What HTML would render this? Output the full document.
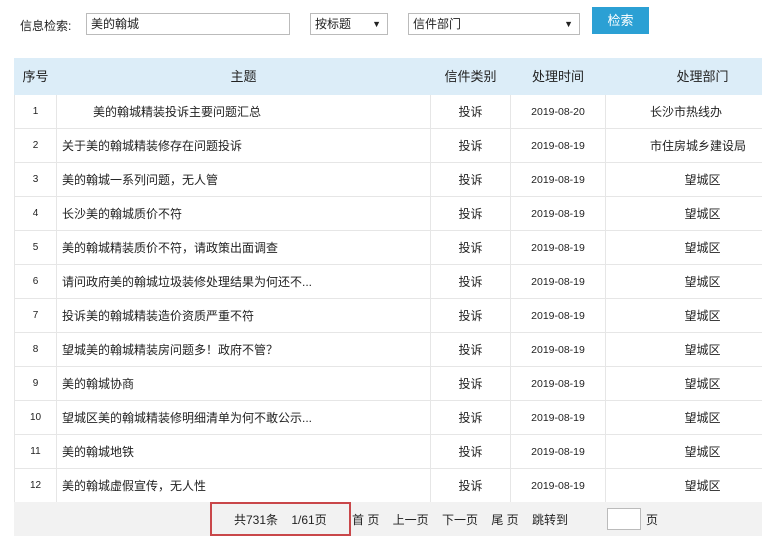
<html><head><style>
body{margin:0;width:762px;height:536px;background:#fff;font-family:"Liberation Sans","Noto Sans CJK SC",sans-serif;font-size:12px;color:#222;position:relative;overflow:hidden}
.a{position:absolute}
.in{border:1px solid #bbb;height:22px;box-sizing:border-box;background:#fff;line-height:20px;padding-left:4px;font-size:12px}
table{position:absolute;left:14px;top:58px;border-collapse:collapse;width:786px;table-layout:fixed}
td{border:1px solid #e6e6e6;height:34px;padding:0;font-size:12px;vertical-align:middle;line-height:14px}
tr.h td{background:#dcedf8;height:36px;font-size:13px;border-color:#dcedf8;text-align:center}
.c{text-align:center}
.n{font-size:10px;text-align:center}
.d{font-size:10.5px;text-align:center}
.t{padding-left:5px}
</style></head><body>
<div class="a" style="left:20px;top:17px;font-size:12px">信息检索:</div>
<div class="a in" style="left:86px;top:13px;width:204px">美的翰城</div>
<div class="a in" style="left:310px;top:13px;width:78px">按标题<span style="position:absolute;right:6px;font-size:9px">▼</span></div>
<div class="a in" style="left:408px;top:13px;width:172px">信件部门<span style="position:absolute;right:6px;font-size:9px">▼</span></div>
<div class="a" style="left:592px;top:7px;width:57px;height:27px;background:#2ba0d4;color:#fff;text-align:center;line-height:27px;font-size:13px">检索</div>
<table>
<col style="width:42px"><col style="width:374px"><col style="width:80px"><col style="width:95px"><col>
<tr class="h"><td>序号</td><td>主题</td><td>信件类别</td><td>处理时间</td><td>处理部门</td></tr>
<tr><td class="n">1</td><td class="t" style="padding-left:36px">美的翰城精装投诉主要问题汇总</td><td class="c">投诉</td><td class="d">2019-08-20</td><td style="padding-left:44px">长沙市热线办</td></tr>
<tr><td class="n">2</td><td class="t">关于美的翰城精装修存在问题投诉</td><td class="c">投诉</td><td class="d">2019-08-19</td><td style="padding-left:44px">市住房城乡建设局</td></tr>
<tr><td class="n">3</td><td class="t">美的翰城一系列问题，无人管</td><td class="c">投诉</td><td class="d">2019-08-19</td><td class="c">望城区</td></tr>
<tr><td class="n">4</td><td class="t">长沙美的翰城质价不符</td><td class="c">投诉</td><td class="d">2019-08-19</td><td class="c">望城区</td></tr>
<tr><td class="n">5</td><td class="t">美的翰城精装质价不符，请政策出面调查</td><td class="c">投诉</td><td class="d">2019-08-19</td><td class="c">望城区</td></tr>
<tr><td class="n">6</td><td class="t">请问政府美的翰城垃圾装修处理结果为何还不...</td><td class="c">投诉</td><td class="d">2019-08-19</td><td class="c">望城区</td></tr>
<tr><td class="n">7</td><td class="t">投诉美的翰城精装造价资质严重不符</td><td class="c">投诉</td><td class="d">2019-08-19</td><td class="c">望城区</td></tr>
<tr><td class="n">8</td><td class="t">望城美的翰城精装房问题多！政府不管？</td><td class="c">投诉</td><td class="d">2019-08-19</td><td class="c">望城区</td></tr>
<tr><td class="n">9</td><td class="t">美的翰城协商</td><td class="c">投诉</td><td class="d">2019-08-19</td><td class="c">望城区</td></tr>
<tr><td class="n">10</td><td class="t">望城区美的翰城精装修明细清单为何不敢公示...</td><td class="c">投诉</td><td class="d">2019-08-19</td><td class="c">望城区</td></tr>
<tr><td class="n">11</td><td class="t">美的翰城地铁</td><td class="c">投诉</td><td class="d">2019-08-19</td><td class="c">望城区</td></tr>
<tr><td class="n">12</td><td class="t">美的翰城虚假宣传，无人性</td><td class="c">投诉</td><td class="d">2019-08-19</td><td class="c">望城区</td></tr>
</table>
<div class="a" style="left:14px;top:502px;width:748px;height:34px;background:#f2f2f2"></div>
<div class="a" style="left:210px;top:502px;width:137px;height:30px;border:2px solid #c9474a"></div>
<div class="a" style="left:234px;top:511px;font-size:12px;white-space:pre">共731条    1/61页</div>
<div class="a" style="left:352px;top:511px;font-size:12px;white-space:pre">首 页    上一页    下一页    尾 页    跳转到</div>
<div class="a" style="left:607px;top:508px;width:32px;height:20px;background:#fff;border:1px solid #bbb"></div>
<div class="a" style="left:646px;top:511px;font-size:12px">页</div>
</body></html>
